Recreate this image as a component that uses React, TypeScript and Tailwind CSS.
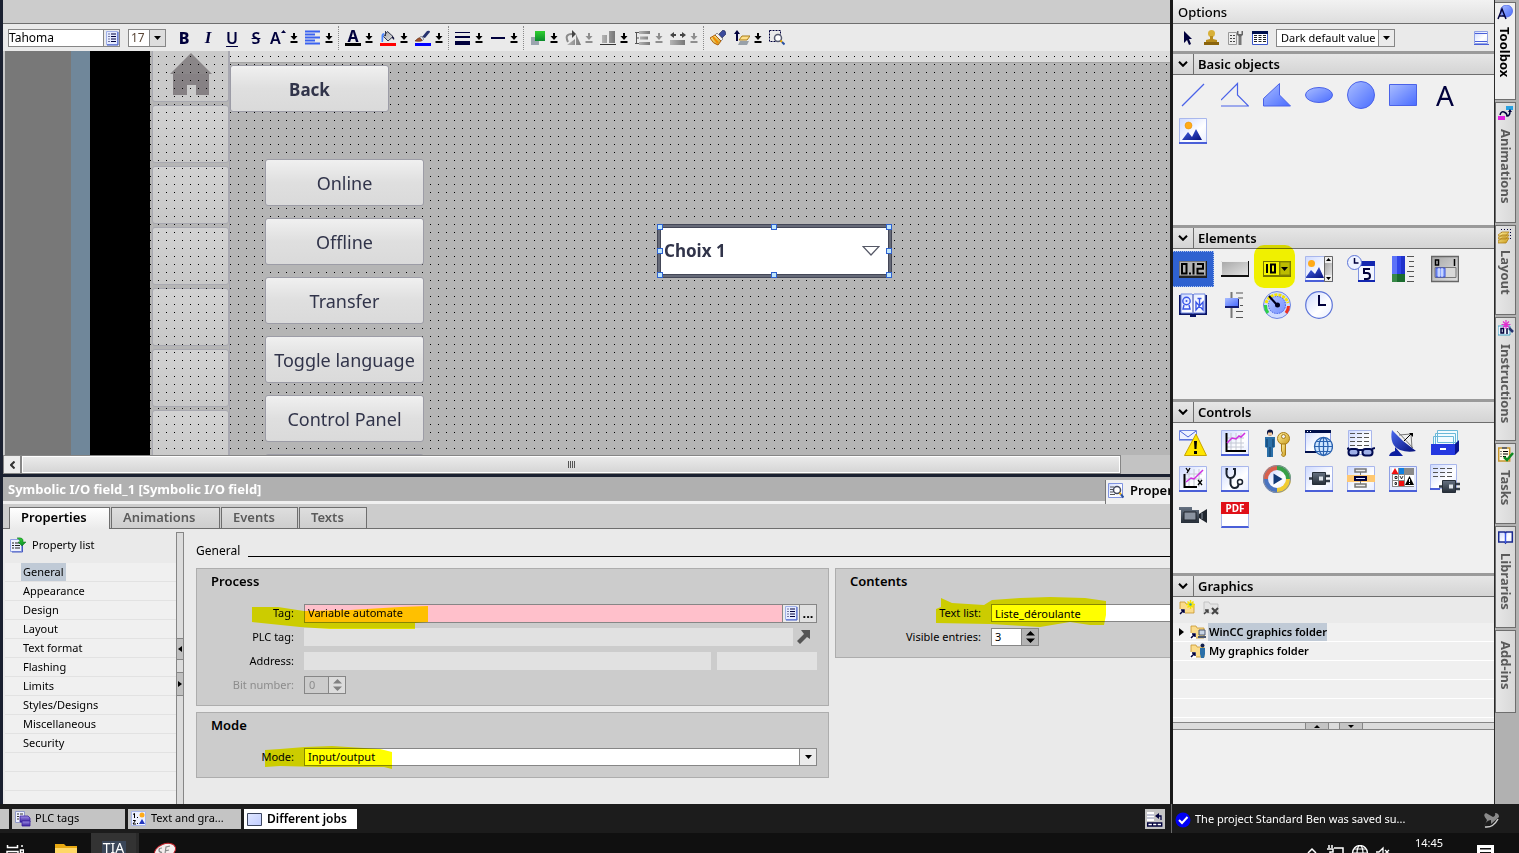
import React, { useState } from "react";
import clsx from "clsx";

type IconProps = { className?: string };

// Gradients shared by every icon on the page
const IconDefs = () => (
  <svg className="absolute h-0 w-0" aria-hidden="true">
    <defs>
      <linearGradient id="blueFill" x1="0" y1="0" x2="1" y2="1">
        <stop offset="0" stopColor="#a9bdff" />
        <stop offset="1" stopColor="#4a6cff" />
      </linearGradient>
      <linearGradient id="paper" x1="0" y1="0" x2="1" y2="1">
        <stop offset="0" stopColor="#cdd9ff" />
        <stop offset="0.6" stopColor="#ffffff" />
        <stop offset="1" stopColor="#e6ecff" />
      </linearGradient>
      <linearGradient id="navy" x1="0" y1="0" x2="1" y2="1">
        <stop offset="0" stopColor="#4a6af0" />
        <stop offset="1" stopColor="#06107a" />
      </linearGradient>
      <linearGradient id="metal" x1="0" y1="0" x2="1" y2="1">
        <stop offset="0" stopColor="#a6a6a6" />
        <stop offset="1" stopColor="#e2e2e2" />
      </linearGradient>
      <linearGradient id="greyShade" x1="0" y1="0" x2="1" y2="0">
        <stop offset="0" stopColor="#b5b5b5" />
        <stop offset="1" stopColor="#777777" />
      </linearGradient>
      <linearGradient id="gold" x1="0" y1="0" x2="1" y2="1">
        <stop offset="0" stopColor="#fff0a0" />
        <stop offset="1" stopColor="#c99a18" />
      </linearGradient>
      <linearGradient id="green" x1="0" y1="0" x2="0" y2="1">
        <stop offset="0" stopColor="#2fd02f" />
        <stop offset="1" stopColor="#0b8a2b" />
      </linearGradient>
      <linearGradient id="purple" x1="0" y1="0" x2="0" y2="1">
        <stop offset="0" stopColor="#a090e8" />
        <stop offset="1" stopColor="#3a1f9c" />
      </linearGradient>
      <linearGradient id="steel" x1="0" y1="0" x2="0" y2="1">
        <stop offset="0" stopColor="#667282" />
        <stop offset="1" stopColor="#262e38" />
      </linearGradient>
    </defs>
  </svg>
);

const Svg16 = ({ children, className }: React.PropsWithChildren<IconProps>) => (
  <svg
    viewBox="0 0 16 16"
    className={clsx("size-4 shrink-0", className)}
    fill="none"
    aria-hidden="true"
  >
    {children}
  </svg>
);

const Svg28 = ({ children }: React.PropsWithChildren) => (
  <svg viewBox="0 0 28 28" className="size-7" fill="none" aria-hidden="true">
    {children}
  </svg>
);

const Sheet = () => (
  <>
    <path d="M.5 1.500h27v25H.5z" fill="url(#paper)" stroke="#a9b7ec" />
    <path d="M0 26h28" stroke="#4a5fd8" strokeWidth="2" />
  </>
);

const DropArrow = ({ dim }: { dim?: boolean }) => (
  <svg viewBox="0 0 8 10" className="h-2.5 w-2" aria-hidden="true">
    <path
      d="M3 0h2v3h2.500L4 7 .5 3H3zM.5 8h7v2h-7z"
      fill={dim ? "#8e8e8e" : "#000000"}
    />
  </svg>
);

const Triangle = () => (
  <svg viewBox="0 0 7 4" className="h-1 w-[7px]" aria-hidden="true">
    <path d="M0 0h7L3.500 4z" fill="#000" />
  </svg>
);

const ListIcon = () => (
  <Svg16 className="size-3.5">
    <path d="M2.500 1.500h11v13h-11z" fill="#e6ecff" stroke="#a0b0e8" />
    <path
      d="M4.500 4h1M7 4h5M4.500 6.500h1M7 6.500h5M4.500 9h1M7 9h5M4.500 11.500h1M7 11.500h5"
      stroke="#00003c"
    />
    <path d="M14 2v13H3" stroke="#3c56c8" />
  </Svg16>
);

/* ---------- format toolbar ---------- */

const formatTools = {
  align: (
    <Svg16>
      <path
        d="M0 1.500h15M0 4.500h10M0 7.500h15M0 10.500h10M0 13.500h15"
        stroke="#3a62f0"
        strokeWidth="2"
      />
    </Svg16>
  ),
  fill: (
    <Svg16>
      <path d="M7.500 1.500 13 6.500 8 11 3.500 6.500z" fill="url(#metal)" stroke="#30364c" />
      <path d="M5.500 1v5" stroke="#30364c" />
      <path d="M1.500 12V6q0-3 3-3l-1 3-.5 6z" fill="#4a86ff" />
      <path d="M12 6q3 1 2 4l-2-2z" fill="#14143c" />
      <path d="M0 14.500h16" stroke="#f00" strokeWidth="3" />
    </Svg16>
  ),
  brush: (
    <Svg16>
      <path d="m7 7 5-6q3-1 3 1l-5 6z" fill="#26326e" />
      <path d="m6 6 3 3-2 2-3-2z" fill="#d8dce8" stroke="#555" strokeWidth=".5" />
      <path d="M0 11q4-4 5-3l2 2q0 2-7 1z" fill="#a0522d" stroke="#5a2a10" strokeWidth=".6" />
      <path d="M0 14.500h16" stroke="#00f" strokeWidth="3" />
    </Svg16>
  ),
  lineWidths: (
    <Svg16>
      <path d="M0 2.500h15" stroke="#00003c" />
      <path d="M0 7h15" stroke="#00003c" strokeWidth="2" />
      <path d="M0 13h15" stroke="#00003c" strokeWidth="4" />
    </Svg16>
  ),
  lineStyle: (
    <Svg16>
      <path d="M1 8h14" stroke="#00003c" strokeWidth="2" />
    </Svg16>
  ),
  layers: (
    <Svg16>
      <path d="M1 7h8v8H1z" fill="#9aa4ae" />
      <path d="M5 1h10v10H5z" fill="url(#green)" />
    </Svg16>
  ),
  rotate: (
    <Svg16>
      <path d="m11 4 5 11h-5zM10 9v6H2z" fill="url(#greyShade)" />
      <path d="M3 12Q-1 4 7 4" stroke="#8a8a8a" strokeWidth="2" />
      <path d="m7 0 4 4-4 4z" fill="#444" />
    </Svg16>
  ),
  alignBottom: (
    <Svg16>
      <path d="M2 5h5v8H2zM9 1h6v12H9z" fill="url(#greyShade)" />
      <path d="M0 14.500h16" stroke="#333" />
    </Svg16>
  ),
  distribute: (
    <Svg16>
      <path d="M4 1h11v3H4zM5 6.500h8v3H5zM4 12h11v3H4z" fill="url(#greyShade)" />
      <path d="M1.500 2v12M0 2.500h4M0 13.500h4M1 8h3" stroke="#555" />
    </Svg16>
  ),
  sameWidth: (
    <Svg16>
      <path d="M0 10h15v5H0z" fill="url(#greyShade)" />
      <path d="m0 5 4-3v6zM16 5l-4-3v6z" fill="#444" />
      <path d="M3 5h3M10 5h3" stroke="#444" strokeWidth="2" />
    </Svg16>
  ),
  painter: (
    <Svg16>
      <path d="m9 4 4-4 2 1 1 3-4 4z" fill="#3a4a9c" stroke="#1a2454" strokeWidth=".6" />
      <path d="m7 3 6 6-2 2-6-6z" fill="#f0f0f4" stroke="#555" strokeWidth=".6" />
      <path d="m5 5 6 6-3 4q-5-1-8-7z" fill="url(#gold)" stroke="#b0600c" />
      <path d="m3 7 5 6" stroke="#f08a00" strokeWidth="2" />
    </Svg16>
  ),
  order: (
    <Svg16>
      <path d="M6 11h9l-2 4H4z" fill="#98a0a8" />
      <path d="M8 6h8l-3 4H5z" fill="#ffe08a" stroke="#a87c18" />
      <path d="M3 11V3" stroke="#00003c" strokeWidth="2" />
      <path d="M0 4 3 0l3 4z" fill="#00003c" />
    </Svg16>
  ),
  zoomArea: (
    <Svg16>
      <path d="M.5.5h11v11H.5z" stroke="#00003c" strokeDasharray="2 1" />
      <circle cx="9" cy="8" r="3.500" fill="#fff" stroke="#555a70" strokeWidth="1.500" />
      <path d="m11.500 10.500 1.500 1.500" stroke="#e8a800" strokeWidth="2" />
      <path d="m13 12 2.500 2.500" stroke="#2a50a0" strokeWidth="2" />
    </Svg16>
  ),
};

const ToolSeparator = () => (
  <span className="mr-1 h-6 border-l border-dotted border-[#8a8a8a]" />
);

const SplitTool = ({
  label,
  dim,
  children,
}: React.PropsWithChildren<{ label: string; dim?: boolean }>) => (
  <div className="mr-1 flex shrink-0 items-center">
    <button aria-label={label} className="flex w-5 items-center justify-center">
      {children}
    </button>
    <button
      aria-label={`${label} options`}
      className="flex w-[11px] items-center justify-center"
    >
      <DropArrow dim={dim} />
    </button>
  </div>
);

const FormatToolbar = () => (
  <div className="flex h-[27px] shrink-0 items-center overflow-hidden bg-[#eaeaea] pl-[5px] text-[#00003c]">
    <div className="flex h-[18px] w-28 shrink-0 border border-[#868686] bg-white">
      <input
        aria-label="Font family"
        defaultValue="Tahoma"
        className="w-0 flex-1 bg-transparent text-[12px] leading-4 text-black outline-none"
      />
      <button
        aria-label="Choose font"
        className="flex w-4 items-center justify-center border-l border-[#868686] bg-[#ebebeb]"
      >
        <ListIcon />
      </button>
    </div>
    <div className="ml-2 flex h-[18px] w-[38px] shrink-0 border border-[#868686] bg-white">
      <input
        aria-label="Font size"
        defaultValue="17"
        className="w-0 flex-1 bg-transparent pl-0.5 text-[12px] leading-4 text-[#5a4636] outline-none"
      />
      <button
        aria-label="Choose font size"
        className="flex w-4 items-center justify-center border-l border-[#868686] bg-[#dddddd]"
      >
        <Triangle />
      </button>
    </div>
    <button className="ml-1.5 w-6 shrink-0 text-[16px] font-extrabold">B</button>
    <button className="w-6 shrink-0 font-['Liberation_Serif',serif] text-[17px] font-bold italic">
      I
    </button>
    <button className="w-6 shrink-0 text-[16px] font-semibold underline underline-offset-2">
      U
    </button>
    <button className="w-6 shrink-0 text-[16px] font-semibold line-through">
      S
    </button>
    <SplitTool label="Text size">
      <span className="text-[16px] font-semibold">A</span>
      <svg viewBox="0 0 5 3" className="mb-3 h-[3px] w-[5px]" aria-hidden="true">
        <path d="M0 3h5L2.500 0z" fill="#00003c" />
      </svg>
    </SplitTool>
    <SplitTool label="Alignment">{formatTools.align}</SplitTool>
    <ToolSeparator />
    <SplitTool label="Text colour">
      <span className="h-[17px] w-4 border-b-[3px] border-black text-center text-[16px] leading-[14px] font-bold">
        A
      </span>
    </SplitTool>
    <SplitTool label="Background colour">{formatTools.fill}</SplitTool>
    <SplitTool label="Border colour">{formatTools.brush}</SplitTool>
    <ToolSeparator />
    <SplitTool label="Line width">{formatTools.lineWidths}</SplitTool>
    <SplitTool label="Line style">{formatTools.lineStyle}</SplitTool>
    <ToolSeparator />
    <SplitTool label="Layer">{formatTools.layers}</SplitTool>
    <SplitTool label="Rotate" dim>
      {formatTools.rotate}
    </SplitTool>
    <SplitTool label="Align objects">{formatTools.alignBottom}</SplitTool>
    <SplitTool label="Distribute" dim>
      {formatTools.distribute}
    </SplitTool>
    <SplitTool label="Same size" dim>
      {formatTools.sameWidth}
    </SplitTool>
    <ToolSeparator />
    <button aria-label="Format painter" className="mr-1 flex w-5 shrink-0 justify-center">
      {formatTools.painter}
    </button>
    <SplitTool label="Tab order">{formatTools.order}</SplitTool>
    <button aria-label="Zoom area" className="flex w-5 shrink-0 justify-center">
      {formatTools.zoomArea}
    </button>
  </div>
);

/* ---------- screen editor ---------- */

const GRID =
  "pointer-events-none absolute inset-0 bg-[conic-gradient(from_270deg_at_1px_1px,#000_90deg,transparent_0)] bg-[length:8px_8px] bg-[position:0_5px]";

const jobs = ["Online", "Offline", "Transfer", "Toggle language", "Control Panel"];

const handles = [
  "-left-[4px] -top-[4px]",
  "left-1/2 -ml-1 -top-[4px]",
  "-right-[4px] -top-[4px]",
  "-left-[4px] top-1/2 -mt-[3px]",
  "-right-[4px] top-1/2 -mt-[3px]",
  "-left-[4px] -bottom-[4px]",
  "left-1/2 -ml-1 -bottom-[4px]",
  "-right-[4px] -bottom-[4px]",
];

const HMI_BUTTON =
  "rounded-[3px] border border-[#9c9ca6] bg-linear-to-b from-[#f0f0f0] via-[#dfdfdf] to-[#dadada] pt-0.5 text-[#31344a]";

const ScreenEditor = () => (
  <div className="flex min-h-0 flex-1 overflow-hidden border-l-2 border-[#c8c8c8] bg-[#787878]">
    <div className="w-[66px] shrink-0" />
    <div className="w-[19px] shrink-0 bg-[#70879a]" />
    <div className="w-[60px] shrink-0 bg-black" />
    <div className="relative flex min-w-0 flex-1 overflow-hidden bg-[#b5b5b5]">
      {/* navigation column of the template */}
      <div className="flex w-20 shrink-0 flex-col gap-[3px] border-r border-[#a8a8b2] pl-0.5">
        <div className="flex h-[51px] shrink-0 justify-center rounded-b-[3px] border border-t-0 border-[#a8a8b0] bg-[#cacaca]">
          <svg viewBox="0 0 42 44" className="h-11 w-[42px]" aria-hidden="true">
            <path d="M21 2 42 23H0z" fill="#8a8688" />
            <path d="M3 23h36v21H26V34h-9v10H3z" fill="#868184" />
          </svg>
        </div>
        {Array.from({ length: 6 }).map((_, i) => (
          <div
            key={i}
            className="h-[58px] shrink-0 rounded-[3px] border border-[#a8a8b0] bg-linear-to-b from-[#d2d2d2] to-[#c8c8c8]"
          />
        ))}
      </div>
      <div className="h-3 flex-1 border-b border-[#a4a4a4] bg-[#dcdcdc]" />
      <div className={GRID} />

      <button
        className={clsx(
          HMI_BUTTON,
          "absolute top-3.5 left-20 h-[47px] w-[159px] text-[17px] font-bold",
        )}
      >
        Back
      </button>
      <div className="absolute top-[108px] left-[115px] flex flex-col gap-3">
        {jobs.map((job) => (
          <button
            key={job}
            className={clsx(HMI_BUTTON, "h-[47px] w-[159px] text-[18px]")}
          >
            {job}
          </button>
        ))}
        <div className={clsx(HMI_BUTTON, "h-[47px] w-[159px]")} />
      </div>

      {/* selected symbolic I/O field */}
      <div className="absolute top-[173px] left-[507px] h-[54px] w-[235px] border border-[#444757] bg-[#666a78] p-0.5">
        <button className="flex size-full items-center justify-between border border-[#444757] bg-white pr-2 pl-[3px]">
          <span className="text-[17px] font-bold text-[#31344a]">Choix 1</span>
          <svg viewBox="0 0 18 10" className="h-2.5 w-[18px]" fill="none" aria-hidden="true">
            <path d="M1 .5h16L9 9z" stroke="#555866" strokeWidth="1.200" />
          </svg>
        </button>
        <div className="pointer-events-none absolute inset-[3px]">
          {handles.map((pos) => (
            <span
              key={pos}
              className={clsx("absolute size-1.5 border border-[#2f62d0] bg-[#bfe6fb]", pos)}
            />
          ))}
        </div>
      </div>
    </div>
  </div>
);

const HorizontalScrollbar = () => (
  <div className="flex h-[19px] shrink-0 bg-[#c3c3c3]">
    <button
      aria-label="Scroll left"
      className="flex w-[18px] items-center justify-center border border-[#868686] bg-[#ececec]"
    >
      <svg viewBox="0 0 5 8" className="h-2 w-[5px]" fill="none" aria-hidden="true">
        <path d="M4.500.5 1 4l3.500 3.500" stroke="#333" strokeWidth="2" />
      </svg>
    </button>
    <div className="mr-[49px] flex flex-1 items-center justify-center gap-px border border-[#868686] bg-linear-to-b from-[#ececec] to-[#d4d4d4] outline-1 -outline-offset-2 outline-white">
      {[0, 1, 2, 3].map((i) => (
        <span key={i} className="h-[7px] w-px bg-[#555]" />
      ))}
    </div>
  </div>
);

/* ---------- inspector ---------- */

const inspectorTabs = [
  { name: "Properties", width: "w-[101px] pl-[11px]" },
  { name: "Animations", width: "w-[109px] pl-[11px]" },
  { name: "Events", width: "w-[77px] pl-[11px]" },
  { name: "Texts", width: "w-[68px] pl-[11px]" },
];

const categories = [
  "General",
  "Appearance",
  "Design",
  "Layout",
  "Text format",
  "Flashing",
  "Limits",
  "Styles/Designs",
  "Miscellaneous",
  "Security",
];

const Marker = ({ points }: { points: string }) => (
  <svg
    className="pointer-events-none absolute top-0 left-0 h-20 w-72 overflow-visible mix-blend-multiply"
    aria-hidden="true"
  >
    <polygon points={points} fill="#ffff00" />
  </svg>
);

const Group = ({
  title,
  className,
  children,
}: React.PropsWithChildren<{ title: string; className?: string }>) => (
  <section className={clsx("relative border border-[#adadad] bg-[#cccccc] pb-2.5", className)}>
    <h3 className="h-8 pt-1 pl-3.5 text-[13px] leading-4 font-semibold">{title}</h3>
    {children}
  </section>
);

const Field = ({
  id,
  label,
  labelWidth,
  dim,
  children,
}: React.PropsWithChildren<{
  id: string;
  label: string;
  labelWidth: string;
  dim?: boolean;
}>) => (
  <div className="flex h-6 items-center">
    <label
      htmlFor={id}
      className={clsx("mr-2.5 shrink-0 text-right", labelWidth, dim && "text-[#8c8c8c]")}
    >
      {label}
    </label>
    {children}
  </div>
);

const Stepper = ({ dim }: { dim?: boolean }) => (
  <button
    aria-label="Change value"
    className={clsx(
      "flex w-[17px] flex-col items-center justify-center gap-[3px] border-l border-[#868686]",
      dim ? "bg-[#dcdcdc]" : "bg-[#b4b4b4]",
    )}
  >
    <svg viewBox="0 0 9 12" className="h-3 w-[9px]" aria-hidden="true">
      <path d="M0 4.500h9L4.500 0zM0 7.500h9L4.500 12z" fill={dim ? "#808080" : "#000"} />
    </svg>
  </button>
);

const Inspector = () => {
  const [tab, setTab] = useState("Properties");
  const [category, setCategory] = useState("General");

  return (
    <div className="flex h-[327px] shrink-0 flex-col overflow-hidden bg-[#eaeaea]">
      <div className="flex h-[27px] shrink-0 items-stretch justify-between border-b-[3px] border-[#f0f0f0] bg-[#b0b0b0]">
        <h2 className="pl-[5px] text-[13px] leading-6 font-bold whitespace-nowrap text-white">
          Symbolic I/O field_1 [Symbolic I/O field]
        </h2>
        <button className="mt-[3px] -mb-[3px] flex w-[65px] items-center gap-1.5 overflow-hidden border-l border-[#777] bg-[#f0f0f0] pb-0.5 pl-0.5 text-[13px] font-semibold">
          <Svg16>
            <path d="M.5.5h14v14H.5z" fill="url(#paper)" stroke="#7f93e0" />
            <path d="M2 4h4M2 6.500h3M2 9h3M2 11.500h5" stroke="#555" />
            <circle cx="9" cy="7" r="3.500" fill="#fff" stroke="#444a60" strokeWidth="1.500" />
            <path d="m11.500 10 1.500 1.500" stroke="#e8a800" strokeWidth="2" />
            <path d="m13 11.500 2.500 3" stroke="#2a50a0" strokeWidth="2" />
          </Svg16>
          Properties
        </button>
      </div>

      <div className="flex h-[25px] shrink-0 items-end border-b border-[#6e6e6e] bg-[#cccccc] pl-1.5">
        {inspectorTabs.map(({ name, width }) => (
          <button
            key={name}
            onClick={() => setTab(name)}
            className={clsx(
              "mr-px border border-b-0 border-[#6e6e6e] text-left text-[13px] font-semibold",
              width,
              tab === name
                ? "-mb-px h-[22px] bg-linear-to-b from-white to-[#eaeaea] pb-0.5 text-black"
                : "h-[21px] bg-linear-to-b from-[#dedede] to-[#cecece] text-[#5a5a5a]",
            )}
          >
            {name}
          </button>
        ))}
      </div>

      <div className="flex min-h-0 flex-1 text-[11px]">
        <nav className="w-[173px] shrink-0 overflow-hidden pl-0.5">
          <div className="flex h-[34px] items-center gap-1.5 pb-0.5 pl-[5px]">
            <Svg16>
              <path d="M.5 2.500h11v12H.5z" fill="#eef1ff" stroke="#8fa0e4" />
              <path d="M2 6h2M5 6h5M2 8.500h2M5 8.500h5M2 11h2M5 11h5" stroke="#222" />
              <path d="M12.500 4v11H2" stroke="#4458c0" />
              <path d="M7 1q7-1 6 4h3l-4 4-4-4h2q0-3-3-4z" fill="url(#green)" stroke="#0a6a1c" strokeWidth=".5" />
            </Svg16>
            Property list
          </div>
          <ul>
            {categories.map((name) => (
              <li key={name} className="h-[19px] border-b border-[#e2e2e2] bg-[#f0f0f0] pl-4">
                <button
                  onClick={() => setCategory(name)}
                  className={clsx(
                    "h-[18px] px-0.5 leading-[18px]",
                    category === name && "bg-[#c0cad6]",
                  )}
                >
                  {name}
                </button>
              </li>
            ))}
            {[0, 1, 2].map((i) => (
              <li key={i} className="h-[19px] border-b border-[#e2e2e2] bg-[#f0f0f0]" />
            ))}
          </ul>
        </nav>

        <div className="mt-[3px] flex w-2 shrink-0 flex-col border border-b-0 border-[#868686] bg-[#dcdcdc]">
          <div className="h-[105px]" />
          <button
            aria-label="Collapse list"
            className="flex h-[22px] items-center justify-center border-y border-[#868686] bg-[#c0c0c0]"
          >
            <svg viewBox="0 0 4 6" className="h-1.5 w-1" aria-hidden="true">
              <path d="M4 0v6L0 3z" fill="#000" />
            </svg>
          </button>
          <div className="h-3" />
          <button
            aria-label="Expand list"
            className="flex h-6 items-center justify-center border-y border-[#868686] bg-[#c0c0c0]"
          >
            <svg viewBox="0 0 4 6" className="h-1.5 w-1" aria-hidden="true">
              <path d="M0 0v6l4-3z" fill="#000" />
            </svg>
          </button>
        </div>

        <div className="min-w-0 flex-1 overflow-hidden pl-3">
          <div className="flex h-[39px] items-center">
            <h2 className="mt-1 text-[12px]">General</h2>
            <div className="mt-4 ml-2 flex-1 border-b border-black" />
          </div>
          <div className="flex items-start gap-1.5">
            <div className="flex w-[633px] shrink-0 flex-col gap-1.5">
              <Group title="Process" className="h-[138px]">
                <Field id="tag" label="Tag:" labelWidth="w-[97px]">
                  <div className="flex h-[19px] flex-1 border border-[#868686] bg-[#ffc0cb]">
                    <input
                      id="tag"
                      defaultValue="Variable automate"
                      className="w-0 flex-1 bg-transparent pl-[3px] outline-none"
                    />
                    <button
                      aria-label="Select tag"
                      className="flex w-[17px] items-center justify-center border-l border-[#868686] bg-[#ebebeb]"
                    >
                      <ListIcon />
                    </button>
                    <button
                      aria-label="Browse tags"
                      className="w-[17px] border-l border-[#868686] bg-[#e0e0e0] text-center text-[13px] leading-3 font-bold"
                    >
                      ...
                    </button>
                  </div>
                  <span className="w-[11px]" />
                </Field>
                <Field id="plc-tag" label="PLC tag:" labelWidth="w-[97px]">
                  <input id="plc-tag" readOnly className="h-[18px] w-0 flex-1 bg-[#e1e1e1] outline-none" />
                  <button aria-label="Go to tag" className="mr-[17px] ml-1">
                    <svg viewBox="0 0 14 14" className="size-3.5" aria-hidden="true">
                      <path d="M4 0h9v9l-3-2-7 7-3-3 7-7z" fill="#555555" />
                    </svg>
                  </button>
                </Field>
                <Field id="address" label="Address:" labelWidth="w-[97px]">
                  <input id="address" readOnly className="h-[18px] w-0 flex-1 bg-[#e1e1e1] outline-none" />
                  <input
                    aria-label="Address offset"
                    readOnly
                    className="mr-[11px] ml-1.5 h-[18px] w-[100px] bg-[#e1e1e1] outline-none"
                  />
                </Field>
                <Field id="bit" label="Bit number:" labelWidth="w-[97px]" dim>
                  <div className="flex h-[18px] w-[42px] border border-[#868686]">
                    <input
                      id="bit"
                      disabled
                      defaultValue="0"
                      className="w-0 flex-1 bg-transparent pl-1 text-[#8c8c8c]"
                    />
                    <Stepper dim />
                  </div>
                </Field>
                <Marker points="55,38 81,38 107,42 153,41 203,38 231,37 231,53 218,54 218,60 133,60 103,58 55,53" />
              </Group>
              <Group title="Mode" className="h-[66px]">
                <Field id="mode" label="Mode:" labelWidth="w-[97px]">
                  <div className="relative mr-[11px] h-[18px] flex-1">
                    <select
                      id="mode"
                      defaultValue="Input/output"
                      className="block h-full w-full appearance-none border border-[#868686] bg-white pl-[3px] outline-none"
                    >
                      <option>Input/output</option>
                      <option>Input</option>
                      <option>Output</option>
                    </select>
                    <span className="pointer-events-none absolute inset-y-0 right-0 flex w-[18px] items-center justify-center border border-[#868686] bg-[#ebebeb]">
                      <Triangle />
                    </span>
                  </div>
                </Field>
                <Marker points="68,37 83,36 108,34 135,33 183,36 195,39 195,56 187,54 123,54 83,53 68,54" />
              </Group>
            </div>

            <Group title="Contents" className="h-[90px] min-w-0 flex-1 border-r-0">
              <Field id="text-list" label="Text list:" labelWidth="w-[145px]">
                <input
                  id="text-list"
                  defaultValue="Liste_déroulante"
                  className="h-[18px] w-0 flex-1 border border-r-0 border-[#868686] bg-white pl-[3px] outline-none"
                />
              </Field>
              <Field id="entries" label="Visible entries:" labelWidth="w-[145px]">
                <div className="flex h-[18px] w-12 border border-[#868686] bg-white">
                  <input id="entries" defaultValue="3" className="w-0 flex-1 pl-[3px] outline-none" />
                  <Stepper />
                </div>
              </Field>
              <Marker points="100,40 105,38 105,29 116,34 148,36 156,31 184,29 214,28 249,29 270,32 270,46 268,56 254,56 234,53 204,58 154,55 100,54" />
            </Group>
          </div>
        </div>
      </div>
    </div>
  );
};

/* ---------- toolbox ---------- */

type Tool = { name: string; icon: React.ReactNode; selected?: boolean; marked?: boolean };

const basicObjects: Tool[] = [
  {
    name: "Line",
    icon: (
      <Svg28>
        <path d="M3 25 25 3" stroke="#4a62e8" strokeWidth="1.300" />
      </Svg28>
    ),
  },
  {
    name: "Polyline",
    icon: (
      <Svg28>
        <path d="M0 19 16.500 2.500V14l11 11H0" stroke="#4a62e8" strokeWidth="1.200" />
      </Svg28>
    ),
  },
  {
    name: "Polygon",
    icon: (
      <Svg28>
        <path d="M.5 25V17.500l16-15V14l11 11z" fill="url(#blueFill)" stroke="#4a62e8" />
      </Svg28>
    ),
  },
  {
    name: "Ellipse",
    icon: (
      <Svg28>
        <ellipse cx="14" cy="14" rx="13.500" ry="7.500" fill="url(#blueFill)" stroke="#4a62e8" />
      </Svg28>
    ),
  },
  {
    name: "Circle",
    icon: (
      <Svg28>
        <circle cx="14" cy="14" r="13.500" fill="url(#blueFill)" stroke="#4a62e8" />
      </Svg28>
    ),
  },
  {
    name: "Rectangle",
    icon: (
      <Svg28>
        <path d="M.5 3.500h27v21H.5z" fill="url(#blueFill)" stroke="#4a62e8" />
      </Svg28>
    ),
  },
  {
    name: "Text field",
    icon: <span className="text-[28px] leading-7 text-[#00003c]">A</span>,
  },
  {
    name: "Graphic view",
    icon: (
      <Svg28>
        <Sheet />
        <circle cx="9.500" cy="8.500" r="3.500" fill="#ffab1a" stroke="#e08a00" strokeWidth=".5" />
        <path d="m3 23 6-8 4 5 4-8 6 11z" fill="url(#navy)" />
      </Svg28>
    ),
  },
];

const elements: Tool[] = [
  {
    name: "I/O field",
    selected: true,
    icon: (
      <Svg28>
        <path d="M0 6h28v17H0z" fill="#222" />
        <path d="M.5 6.500h26v14H.5z" fill="#b4b4b4" stroke="#777" />
        <path d="M3 9h4v9H3zM14 8v11M17 9h4M19 9v9h5M19 9v4" stroke="none" />
        <path
          d="M3 9h4.500v9.500H3zM14.500 8v11.500M18 9h6v4.700h-5.500v4.800H25"
          stroke="#000"
          strokeWidth="2"
        />
        <path d="M10 17.500h2v2h-2z" fill="#000" />
      </Svg28>
    ),
  },
  {
    name: "Button",
    icon: (
      <Svg28>
        <path d="M0 6h28v16H0z" fill="#111" />
        <path d="M0 6h27v14H0z" fill="url(#metal)" />
        <path d="M.5 20V6.500H27" stroke="#eee" />
      </Svg28>
    ),
  },
  {
    name: "Symbolic I/O field",
    marked: true,
    icon: (
      <Svg28>
        <path d="M0 6h28v16H0z" fill="#777" />
        <path d="M1 7h15v13H1z" fill="#f4f4f4" />
        <path d="M17 7h10v13H17z" fill="#bcbcbc" stroke="#888" />
        <path d="M4 9v9M8 9.500h4v8H8z" stroke="#000" strokeWidth="2" />
        <path d="M18 12h7l-3.500 4z" fill="#000" />
      </Svg28>
    ),
  },
  {
    name: "Graphic I/O field",
    icon: (
      <Svg28>
        <Sheet />
        <circle cx="6.500" cy="8.500" r="3.500" fill="#ffab1a" />
        <path d="m1 22 5-7 4 4 4-7 5 11H1z" fill="url(#navy)" />
        <path d="M19.500 1.500h8v25h-8z" fill="#eee" stroke="#666" />
        <path d="M20 8h7v12h-7z" fill="url(#metal)" />
        <path d="m21 6 2.500-3L26 6zM21 22l2.500 3 2.500-3z" fill="#000" />
      </Svg28>
    ),
  },
  {
    name: "Date/time field",
    icon: (
      <Svg28>
        <path d="M11.500 6.500h16v20h-16z" fill="#f2f5ff" stroke="#7f93e0" />
        <path d="M11 6h17v5H11zM11 25h17v2H11z" fill="#1226b0" />
        <circle cx="7.500" cy="7.500" r="7" fill="#eef3ff" stroke="#5c74d8" />
        <path d="M7.500 3v5h4" stroke="#00003c" strokeWidth="1.500" />
        <path d="M23 14h-6v4h3q3 0 3 3t-3 3h-3" stroke="#00003c" strokeWidth="2" />
      </Svg28>
    ),
  },
  {
    name: "Bar",
    icon: (
      <Svg28>
        <path d="M3 1h13v18H3z" fill="#3044e8" />
        <path d="M3 1h5v18H3z" fill="#6f86ff" opacity=".7" />
        <path d="M12 1h4v18h-4z" fill="#1424b8" opacity=".6" />
        <path d="M3 19h13v8H3z" fill="#1a6b2e" />
        <path d="M3 19h5v8H3z" fill="#4c9c58" opacity=".6" />
        <path
          d="M18 1.500h7M20 6.500h5M20 11.500h5M18 16.500h7M20 21.500h5M18 26.500h7"
          stroke="#555"
        />
      </Svg28>
    ),
  },
  {
    name: "Switch",
    icon: (
      <Svg28>
        <path d="M.5 1.500h27v25H.5z" fill="url(#metal)" stroke="#666" strokeWidth="1.500" />
        <path d="M4 12.500h21v10H4z" fill="#d8d8d8" stroke="#777" />
        <path d="M5 13h9v9H5z" fill="#8ea8ff" stroke="#3a4fd0" />
        <path d="M8 13v9M11 13v9" stroke="#fff" />
        <path d="M4.500 5h3v5h-3zM23.500 4v7" stroke="#000" strokeWidth="1.500" />
      </Svg28>
    ),
  },
  {
    name: "Symbol library",
    icon: (
      <Svg28>
        <path d="M0 4h28v20H17v2h-6v-2H0z" fill="#0a1466" />
        <path d="M2 3h11l1 1 1-1h11v19H15l-1 1-1-1H2z" fill="url(#paper)" stroke="#6f86e0" />
        <path d="M14 4v19" stroke="#2a3aa8" />
        <circle cx="7.500" cy="10" r="3.700" stroke="#3a56e8" strokeWidth="1.400" />
        <circle cx="7.500" cy="10" r="1" fill="#3a56e8" />
        <path d="m5 14-1 4h7l-1-4M17 11v8l7-8v8zM20.500 15V8M18.500 7.500h4" stroke="#3a56e8" strokeWidth="1.400" />
      </Svg28>
    ),
  },
  {
    name: "Slider",
    icon: (
      <Svg28>
        <path d="M10.500 1v26" stroke="#777" strokeWidth="2" />
        <path d="M15 2h7M17 7h5M15 20.500h7M19 14.500h3M15 26.500h7" stroke="#555" />
        <path d="M4 8h14v9H4z" fill="#111a70" />
        <path d="M4 7h13v8H4z" fill="url(#blueFill)" />
      </Svg28>
    ),
  },
  {
    name: "Gauge",
    icon: (
      <Svg28>
        <circle cx="14" cy="14" r="13.500" fill="#cfdbff" stroke="#6f86e0" />
        <path d="M5 22a12 12 0 0 1-2.500-8" stroke="#2fd04a" strokeWidth="3" />
        <path
          d="M3 12A11.500 11.500 0 0 1 25 12"
          stroke="#f5e400"
          strokeWidth="3"
          strokeDasharray="3 1"
        />
        <path d="M25.500 15a12 12 0 0 1-2.500 7" stroke="#f03020" strokeWidth="3" />
        <circle cx="14" cy="14" r="9" fill="url(#blueFill)" opacity=".7" />
        <circle cx="14" cy="14" r="8.500" stroke="#3a56d8" strokeDasharray="1 1.500" />
        <path d="m6 5 8 9" stroke="#000020" strokeWidth="2" />
        <circle cx="14.500" cy="14" r="2.500" fill="#000020" />
      </Svg28>
    ),
  },
  {
    name: "Clock",
    icon: (
      <Svg28>
        <circle cx="14" cy="14" r="13.300" fill="url(#paper)" stroke="#5c74d8" strokeWidth="1.200" />
        <path d="M14 4v10h7" stroke="#00003c" strokeWidth="2" />
      </Svg28>
    ),
  },
];

const Plug = ({ x, y }: { x: number; y: number }) => (
  <g transform={`translate(${x} ${y})`}>
    <path d="M0 6.500h4M16 4h5M16 9h5" stroke="#333c48" strokeWidth="2.500" />
    <path d="M3.500.5h13v12h-13z" fill="url(#steel)" stroke="#262e38" />
    <path d="M10 4.500h4v4h-4z" fill="#dfe4ea" />
  </g>
);

const controls: Tool[] = [
  {
    name: "Alarm view",
    icon: (
      <Svg28>
        <path d="M.5 1.500h17v9H.5z" fill="#eef2ff" stroke="#6f86e0" />
        <path d="m1 2 8 6 8-6M0 11h18" stroke="#4a62d8" />
        <path d="m17 5 10.500 21.500h-22z" fill="#ffe600" stroke="#c8a400" strokeLinejoin="round" />
        <path d="M15 12h3l-.5 8h-2zM15 22h3v3h-3z" fill="#000" />
      </Svg28>
    ),
  },
  {
    name: "Trend view",
    icon: (
      <Svg28>
        <Sheet />
        <path d="M10 4v18M15 4v18M20 4v18M5 9h18M5 14h18M5 18h18" stroke="#c4c8d4" />
        <path d="M5.500 4v18H25" stroke="#000" strokeWidth="2" />
        <path d="m6 14 5-5 4 1 3-3 2 1 4-4" stroke="#d030e0" strokeWidth="1.500" />
      </Svg28>
    ),
  },
  {
    name: "User view",
    icon: (
      <Svg28>
        <circle cx="7" cy="3.500" r="3" fill="#0a1440" />
        <path d="M5 3.500h4v3H5z" fill="#f0c49a" />
        <path d="M2 8h10v10l-2 1v9H4v-9l-2-1z" fill="#2a6fa8" />
        <path d="M7 18v10M4 10v8M10 10v8" stroke="#0f3c66" />
        <circle cx="20.500" cy="9.500" r="6" fill="url(#gold)" stroke="#a87c18" />
        <circle cx="20.500" cy="7.500" r="2" fill="#f0f0f0" stroke="#a87c18" />
        <path d="M18.500 15h4v11l-2 2-2-2 1-2-1-2z" fill="url(#gold)" stroke="#a87c18" />
      </Svg28>
    ),
  },
  {
    name: "HTML browser",
    icon: (
      <Svg28>
        <path d="M.5 1.500h25v21H.5z" fill="url(#paper)" stroke="#8fa0e4" />
        <path d="M0 1h26v3H0zM0 22h12v2H0z" fill="#00104c" />
        <path d="M2 2.500h1M5 2.500h1" stroke="#fff" />
        <circle cx="18.500" cy="17.500" r="9" fill="#cfe6ff" stroke="#2a62b0" strokeWidth="1.300" />
        <ellipse cx="18.500" cy="17.500" rx="4.500" ry="9" stroke="#2a62b0" strokeWidth="1.200" />
        <path d="M9.500 17.500h18M18.500 8.500v18M11 12.500h15M11 22.500h15" stroke="#2a62b0" strokeWidth="1.200" />
      </Svg28>
    ),
  },
  {
    name: "Watch table",
    icon: (
      <Svg28>
        <path d="M1.500 1.500h23v24h-23z" fill="url(#paper)" stroke="#a9b7ec" />
        <path
          d="M3 4.500h5M10 4.500h5M17 4.500h5M3 8.500h5M10 8.500h5M17 8.500h5M3 12.500h5M10 12.500h5M17 12.500h5M3 16.500h5M10 16.500h5M17 16.500h5"
          stroke="#555"
        />
        <rect x="1.500" y="20" width="10" height="6.500" rx="3" fill="#9fb0e8" stroke="#000a50" strokeWidth="2" />
        <rect x="15.500" y="20" width="10" height="6.500" rx="3" fill="#9fb0e8" stroke="#000a50" strokeWidth="2" />
        <path d="M11 21h5M0 20l2-1M28 19l-3 1" stroke="#000a50" strokeWidth="2" />
      </Svg28>
    ),
  },
  {
    name: "Sm@rtClient view",
    icon: (
      <Svg28>
        <path d="m8 2 16 17M10 6 22 5l1 14" stroke="#777" />
        <path d="m15 12 8-8" stroke="#000" />
        <path d="M20 4h4v4z" fill="#000" />
        <path d="M3 1Q0 16 11 21q8 3 16 1L14 12z" fill="url(#navy)" />
        <path d="m6 18 8 9H0q1-4 6-5z" fill="#0c1ea0" />
      </Svg28>
    ),
  },
  {
    name: "Recipe view",
    icon: (
      <Svg28>
        <path d="M6.500 1.500h20v12h-20zM4.500 4.500h20v12h-20zM2.500 7.500h20v12h-20z" fill="#f2fbff" stroke="#6ab8d8" />
        <path d="M0 15h24v11H0z" fill="#2438e0" />
        <path d="m24 15 4-4v11l-4 4z" fill="#0a1490" />
        <path d="M9 19h6v2H9z" fill="#fff" />
      </Svg28>
    ),
  },
  {
    name: "f(x) trend view",
    icon: (
      <Svg28>
        <Sheet />
        <path d="M10 4v18M15 4v18M20 4v18M5 9h18M5 14h18" stroke="#c4c8d4" />
        <path d="M5.500 9v13H18" stroke="#000" strokeWidth="2" />
        <path d="m7 17 5-4 3 1 9-9" stroke="#d030e0" strokeWidth="1.500" />
        <path d="m7 3 2 3m2-3L8 8M19 15l4 5m0-5-4 5" stroke="#000" strokeWidth="1.300" />
      </Svg28>
    ),
  },
  {
    name: "System diagnostics view",
    icon: (
      <Svg28>
        <Sheet />
        <path
          d="M7 4H5.500v5Q6 13 9.500 13T14 9V4H12M9.500 13v6q1 4 4 4 4 0 4-4"
          stroke="#1a2230"
          strokeWidth="2"
        />
        <circle cx="19" cy="17" r="2.500" fill="#fff" stroke="#1a2230" strokeWidth="1.500" />
      </Svg28>
    ),
  },
  {
    name: "Media player",
    icon: (
      <Svg28>
        <path d="M14 0A14 14 0 0 0 0 14h14z" fill="#d8604c" />
        <path d="M14 0a14 14 0 0 1 14 14H14z" fill="#38a048" />
        <path d="M28 14a14 14 0 0 1-14 14V14z" fill="#f0cc30" />
        <path d="M0 14a14 14 0 0 0 14 14V14z" fill="#4a74c0" />
        <circle cx="14" cy="14" r="13.500" stroke="#8890a0" />
        <circle cx="14" cy="14" r="9" fill="url(#paper)" />
        <path d="m10.500 8.500 9 5.500-9 5.500z" fill="#123a78" />
      </Svg28>
    ),
  },
  {
    name: "Channel diagnostics",
    icon: (
      <Svg28>
        <Sheet />
        <Plug x={4} y={7} />
      </Svg28>
    ),
  },
  {
    name: "Criteria analysis",
    icon: (
      <Svg28>
        <Sheet />
        <path d="M0 10h28v7H0z" fill="#ffc870" />
        <path d="M13.500 7v3M13.500 16v3" stroke="#777" />
        <path d="M8 4h11v3H8zM8 19h11v3H8z" fill="#eee" stroke="#777" strokeWidth="1.500" />
        <path d="M8 12h11v3H8z" fill="#dfe6ff" stroke="#00003c" strokeWidth="2" />
      </Svg28>
    ),
  },
  {
    name: "Alarm indicator overview",
    icon: (
      <Svg28>
        <path d="M.5 1.500h27v25H.5z" fill="#e6ecff" stroke="#8fa0e4" />
        <path d="M3 3h22v19H3z" fill="#8a8a8a" />
        <path d="M3 3h6v6H3z" fill="#fff" />
        <path d="m6 3 3.500 6h-7z" fill="#f01010" />
        <path d="M10 3h5v6h-5z" fill="#1080e0" />
        <path d="M4 10h5v5H4zM10 10h5v5h-5zM4 16h5v5H4z" fill="#fff" />
        <path d="M10 16h5v5h-5z" fill="#f01010" />
        <path d="M6 11.500h2v2H6zM11 11l1.500 3L14 11M6 17.500h1.500v2H6z" stroke="#000" strokeWidth=".8" />
        <path d="M16 10h9v11h-9z" fill="#fff" />
        <path d="m20.500 11 4.500 9h-9z" fill="#000" />
        <path d="M20.500 14v3M20.500 18v1" stroke="#fff" />
        <path d="M0 26h28" stroke="#4a5fd8" strokeWidth="2" />
      </Svg28>
    ),
  },
  {
    name: "PLC status view",
    icon: (
      <svg
        viewBox="0 0 30 30"
        className="size-[30px]"
        fill="none"
        aria-hidden="true"
      >
        <path d="M.5.5h26v24H.5z" fill="url(#paper)" stroke="#a9b7ec" />
        <path
          d="M3 4.500h5M10 4.500h5M17 4.500h5M3 8.500h5M10 8.500h5M17 8.500h5M3 12.500h5M10 12.500h5M17 12.500h5"
          stroke="#555"
        />
        <path d="M0 25h10" stroke="#4a5fd8" strokeWidth="2" />
        <Plug x={9} y={16} />
      </svg>
    ),
  },
  {
    name: "Camera view",
    icon: (
      <Svg28>
        <path d="M0 6h13v3H0zM2 9h18v13H2z" fill="url(#steel)" />
        <path d="M5 11h12v8H5z" fill="#8a93a0" stroke="#20262e" />
        <path d="m20 13 8-5v14l-8-5z" fill="#20262e" />
        <path d="M23 12v6" stroke="#8a93a0" />
      </Svg28>
    ),
  },
  {
    name: "PDF view",
    icon: (
      <span className="block h-[26px] w-7 border border-b-2 border-[#a9b7ec] border-b-[#4a5fd8] bg-white">
        <span className="-mx-px -mt-px block h-3 bg-[#e01018] text-center text-[10px] leading-3 font-bold text-white">
          PDF
        </span>
      </span>
    ),
  },
];

const SectionHeader = ({ title }: { title: string }) => (
  <button className="flex h-6 w-full items-center border-t-[3px] border-b border-t-[#9a9a9a] border-b-[#6e6e6e] bg-linear-to-b from-[#e6e6e6] to-[#d4d4d4] text-left text-[13px] font-semibold">
    <span className="flex h-full w-[21px] items-center justify-center border-r border-[#6e6e6e]">
      <svg viewBox="0 0 10 6" className="h-1.5 w-2.5" fill="none" aria-hidden="true">
        <path d="m1 .8 4 4 4-4" stroke="#000" strokeWidth="2" />
      </svg>
    </span>
    <span className="pt-0.5 pl-1">{title}</span>
  </button>
);

const ToolSection = ({ title, tools }: { title: string; tools: Tool[] }) => (
  <section className="h-[174px] shrink-0">
    <SectionHeader title={title} />
    <div className="-ml-px grid grid-cols-[repeat(auto-fill,42px)] pt-0.5">
      {tools.map((tool) => (
        <button
          key={tool.name}
          title={tool.name}
          className={clsx(
            "relative flex h-9 items-center justify-center",
            tool.selected && "bg-[#2f62d0] outline-1 -outline-offset-1 outline-[#a8c0f0] outline-dotted",
          )}
        >
          {tool.icon}
          {tool.marked && (
            <span className="pointer-events-none absolute -top-1.5 right-[3px] -bottom-px -left-0.5 rounded-[10px] bg-[#ffff00] mix-blend-multiply" />
          )}
        </button>
      ))}
    </div>
  </section>
);

const FolderIcon = ({ person }: { person?: boolean }) => (
  <Svg16>
    <path d="M1 2h5l1 2h7v10H1z" fill="#fbdc8c" stroke="#c8962c" strokeWidth=".8" />
    {person ? (
      <>
        <circle cx="12.500" cy="2.500" r="2" fill="#12204c" />
        <path d="M10 5h5v6l-1 4h-3l-1-4z" fill="#2a6fa8" />
      </>
    ) : (
      <>
        <path d="M9 6h6v5H9z" fill="#c8d4e4" stroke="#4c5870" />
        <path d="M8 12h8v2H8z" fill="#4c5870" />
      </>
    )}
    <path d="M0 9h6v6H0z" fill="#fff" />
    <path d="m1 14 4-4M2 10h3v3" stroke="#00003c" strokeWidth="1.500" />
  </Svg16>
);

const Toolbox = () => (
  <aside className="flex w-[321px] shrink-0 flex-col overflow-hidden bg-[#f0f0f0]">
    <h2 className="h-6 shrink-0 border-b border-[#6e6e6e] bg-linear-to-b from-[#f2f2f2] to-[#dedede] pl-[5px] text-[13px] leading-6 font-medium">
      Options
    </h2>
    <div className="flex h-[27px] shrink-0 items-center bg-[#eaeaea] pr-[5px] pl-[7px]">
      <button aria-label="Pointer" className="w-6">
        <Svg16>
          <path d="M4 1v12l3-3 2 5 2-1-2-5h3z" fill="#00003c" />
        </Svg16>
      </button>
      <button aria-label="Stamp" className="w-6">
        <Svg16>
          <circle cx="7.500" cy="3.500" r="3.500" fill="#d8b038" />
          <path d="M6 6h3v3l4 1v2H2v-2l4-1z" fill="#b88c1c" />
          <path d="M0 12h15v3H0z" fill="#8a640c" />
        </Svg16>
      </button>
      <button aria-label="Toolbox settings" className="w-6">
        <Svg16>
          <path d="M.5 2.500h8v12h-8z" fill="#eee" stroke="#999" />
          <path d="M2 5.500h2M5 5.500h2M2 8.500h2M5 8.500h2M2 11.500h2M5 11.500h2" stroke="#444" />
          <path d="M12 15V6" stroke="#777" strokeWidth="3" />
          <path d="M9 1v4l3 2 3-2V1h-1.500v3h-3V1z" fill="#666" />
        </Svg16>
      </button>
      <button aria-label="Show columns" className="w-6">
        <Svg16>
          <path d="M.5 1.500h15v13H.5z" fill="#fff" stroke="#3a56c8" />
          <path d="M0 1h16v3H0z" fill="#00104c" />
          <path
            d="M2 5.500h3M6.500 5.500h3M11 5.500h3M2 7.500h3M6.500 7.500h3M11 7.500h3M2 9.500h3M6.500 9.500h3M11 9.500h3M2 11.500h3M6.500 11.500h3M11 11.500h3"
            stroke="#222"
          />
        </Svg16>
      </button>
      <div className="relative h-[18px] w-[119px]">
        <select
          aria-label="Style"
          defaultValue="Dark default value"
          className="block size-full appearance-none border border-[#868686] bg-white pl-1 text-[11px] outline-none"
        >
          <option>Dark default value</option>
          <option>Light default value</option>
        </select>
        <span className="pointer-events-none absolute inset-y-0 right-0 flex w-[17px] items-center justify-center border border-[#868686] bg-[#ebebeb]">
          <Triangle />
        </span>
      </div>
      <button aria-label="Restore pane" className="ml-auto">
        <Svg16>
          <path d="M1.500 1.500h13v12h-13z" fill="url(#paper)" stroke="#8fa0e4" />
          <path d="M2 3.500h12M2 11.500h12M1 14.500h15" stroke="#4a5fd8" />
        </Svg16>
      </button>
    </div>

    <ToolSection title="Basic objects" tools={basicObjects} />
    <ToolSection title="Elements" tools={elements} />
    <ToolSection title="Controls" tools={controls} />

    <section className="flex min-h-0 flex-1 flex-col">
      <SectionHeader title="Graphics" />
      <div className="flex h-[26px] shrink-0 items-center gap-2 bg-[#eaeaea] pb-1 pl-1.5">
        <button aria-label="New folder link">
          <Svg16>
            <path d="M1 2h5l1 2h8v9H1z" fill="#fbdc8c" stroke="#c8962c" strokeWidth=".8" />
            <path d="M11.500 0v9M7 4.500h9M8.500 1.500l6 6M14.500 1.500l-6 6" stroke="#f5e400" strokeWidth="1.500" />
            <circle cx="11.500" cy="4.500" r="1.200" fill="#30a0b0" />
            <path d="M0 9h6v6H0z" fill="#eaeaea" />
            <path d="m1 14 4-4M2 10h3v3" stroke="#00003c" strokeWidth="1.500" />
          </Svg16>
        </button>
        <button aria-label="Remove folder link">
          <Svg16>
            <path d="M1 2h5l1 2h8v9H1z" fill="#e4e4e4" stroke="#bbb" strokeWidth=".8" />
            <path d="m9 8 6 6M15 8l-6 6" stroke="#444" strokeWidth="2" />
            <path d="m1 14 4-4M2 10h3v3" stroke="#444" strokeWidth="1.500" />
          </Svg16>
        </button>
      </div>
      <ul className="text-[11px] font-semibold">
        <li className="flex h-[19px] items-center border-b border-white pl-1.5">
          <svg viewBox="0 0 5 8" className="mr-1.5 h-2 w-[5px]" aria-hidden="true">
            <path d="M0 0v8l5-4z" fill="#000" />
          </svg>
          <FolderIcon />
          <button className="ml-0.5 h-[18px] bg-[#c0cad6] pl-px leading-[18px]">
            WinCC graphics folder
          </button>
        </li>
        <li className="flex h-[19px] items-center border-b border-white pl-[17px]">
          <FolderIcon person />
          <button className="ml-[3px] leading-[18px]">My graphics folder</button>
        </li>
        {[0, 1, 2].map((i) => (
          <li key={i} className="h-[19px] border-b border-white" />
        ))}
      </ul>
      <div className="mt-1 flex h-2 shrink-0 justify-center gap-2.5 border-y border-[#868686] bg-[#dcdcdc]">
        <button aria-label="Shrink preview" className="flex w-6 items-center justify-center border-x border-[#868686] bg-[#c4c4c4]">
          <svg viewBox="0 0 6 3" className="h-[3px] w-1.5" aria-hidden="true">
            <path d="M0 3h6L3 0z" fill="#000" />
          </svg>
        </button>
        <button aria-label="Grow preview" className="flex w-6 items-center justify-center border-x border-[#868686] bg-[#c4c4c4]">
          <svg viewBox="0 0 6 3" className="h-[3px] w-1.5" aria-hidden="true">
            <path d="M0 0h6L3 3z" fill="#000" />
          </svg>
        </button>
      </div>
    </section>
  </aside>
);

/* ---------- task card tabs ---------- */

const taskCards = [
  {
    name: "Toolbox",
    height: "h-[98px]",
    icon: (
      <Svg16>
        <circle cx="9.500" cy="6" r="6" fill="url(#blueFill)" stroke="#4a62e8" strokeWidth=".8" />
        <path d="m1 14 4-10 4 10M2.500 11h5" stroke="#00003c" strokeWidth="1.500" />
      </Svg16>
    ),
  },
  {
    name: "Animations",
    height: "h-[121px]",
    icon: (
      <Svg16>
        <path d="M8 1h7v4H8z" fill="#28a0e0" />
        <path d="M0 11h7v4H0z" fill="#e020e0" />
        <path d="M2 10q1-4 4-3t3 4q3 0 3-5" stroke="#00003c" strokeWidth="1.500" />
        <path d="m10 7 2-3 2 3z" fill="#00003c" />
      </Svg16>
    ),
  },
  {
    name: "Layout",
    height: "h-[90px]",
    icon: (
      <Svg16>
        <path
          d="M3 1.500h12M3 4.500h12M3 7.500h12M3 10.500h12"
          stroke="#00003c"
          strokeDasharray="1 2"
        />
        <path d="m0 13 4-3h7l-3 5H0zM0 10l4-3h7l-3 4H0zM0 7l4-3h7L8 8H0z" fill="url(#gold)" stroke="#b08018" strokeWidth=".8" />
      </Svg16>
    ),
  },
  {
    name: "Instructions",
    height: "h-[124px]",
    icon: (
      <Svg16>
        <path d="M0 6h12v9H0z" fill="#eef6ff" stroke="#40a0c0" />
        <path d="M3 8.500h2.500v4.500H3zM9 8v6" stroke="#00003c" strokeWidth="1.500" />
        <path d="M8 0v9M3.500 4.500h9M5 1.500l6 6M11 1.500l-6 6" stroke="#e030d0" strokeWidth="1.200" />
        <path d="m11 8 4 4" stroke="#26326e" strokeWidth="2.500" />
      </Svg16>
    ),
  },
  {
    name: "Tasks",
    height: "h-[81px]",
    icon: (
      <Svg16>
        <path d="M.7 2h11v13H.7z" fill="#fffbe8" stroke="#c8962c" strokeWidth="1.500" />
        <path d="M4 1h5v2H4z" fill="#666" />
        <path d="M2.500 5.500h1M5 5.500h5M2.500 8h1M5 8h5M2.500 10.500h1M5 10.500h3" stroke="#000" strokeWidth="1.200" />
        <path d="m6 11 3 3 6-7" stroke="#0c8a20" strokeWidth="2.500" />
      </Svg16>
    ),
  },
  {
    name: "Libraries",
    height: "h-[102px]",
    icon: (
      <Svg16>
        <path d="M.7 3h6l.8 1 .8-1h6v10h-6l-.8 1-.8-1h-6z" fill="url(#paper)" stroke="#1a2a90" strokeWidth="1.500" />
        <path d="M7.500 4v10" stroke="#3a56e8" strokeWidth="1.500" />
      </Svg16>
    ),
  },
  { name: "Add-ins", height: "h-[83px]", icon: null },
];

const TaskCardTabs = () => (
  <div className="flex w-[25px] shrink-0 flex-col items-start gap-0.5 border-l border-[#2a2a2a] bg-[#b1b1b1] pt-0.5">
    {taskCards.map((card, i) => (
      <button
        key={card.name}
        className={clsx(
          "flex w-[21px] shrink-0 flex-col items-center border border-[#6e6e6e] pt-0.5",
          card.height,
          i === 0
            ? "border-l-0 bg-[#f0f0f0] text-black"
            : "bg-linear-to-r from-[#e6e6e6] to-[#d8d8d8] text-[#5a5a5a]",
        )}
      >
        {card.icon}
        <span
          className={clsx(
            "text-[13px] leading-[18px] font-bold whitespace-nowrap [writing-mode:vertical-rl]",
            i === 0 || i === 2 ? "pt-1.5" : "pt-2",
          )}
        >
          {card.name}
        </span>
      </button>
    ))}
  </div>
);

/* ---------- bottom bars ---------- */

const editorTabs = [
  {
    name: "PLC tags",
    icon: (
      <Svg16>
        <path d="M.5.5h9v11h-9z" fill="#eef1ff" stroke="#8f98c8" />
        <path d="M2 3h2M5 3h3M2 5.500h2M5 5.500h3M2 8h2" stroke="#333" />
        <path d="M5 5h8l2 2v4H5z" fill="url(#purple)" stroke="#3a1f9c" strokeWidth=".8" />
        <path d="M7 10h8v5H7z" fill="url(#purple)" stroke="#3a1f9c" strokeWidth=".8" />
      </Svg16>
    ),
  },
  {
    name: "Text and gra...",
    icon: (
      <Svg16>
        <path d="M.5.5h14v14H.5z" fill="#eef1ff" stroke="#a9b7ec" />
        <path d="M2 3.500 3.500 2.500V7M2 9.500h2.500L2 13h3M6 6.500h1M6 12.500h1" stroke="#000" />
        <circle cx="11" cy="4" r="2.500" fill="#ffab1a" />
        <path d="m11 8 3 5H8z" fill="#2438c0" />
      </Svg16>
    ),
  },
  {
    name: "Different jobs",
    active: true,
    icon: (
      <Svg16>
        <path d="M.5 2.500h14v12H.5z" fill="url(#blueFill)" fillOpacity=".35" stroke="#3c4660" />
      </Svg16>
    ),
  },
];

const StatusBar = () => (
  <footer className="flex h-[29px] shrink-0 items-center bg-[#1c1c1c] text-[11px]">
    <div className="flex min-w-0 flex-1 items-center gap-[3px]">
      <span className="h-5 w-[9px] bg-[#c4c4c4]" />
      {editorTabs.map((tab) => (
        <button
          key={tab.name}
          className={clsx(
            "flex h-5 w-[113px] items-center gap-1 pl-[3px]",
            tab.active ? "bg-white text-[12px] font-semibold" : "bg-[#c4c4c4]",
          )}
        >
          {tab.icon}
          {tab.name}
        </button>
      ))}
      <button
        aria-label="Arrange editors"
        className="mr-1.5 ml-auto flex size-5 items-center justify-center bg-[#c4c4c4]"
      >
        <Svg16>
          <path d="M0 1h7v9H0z" fill="#fff" />
          <path d="M0 4h7M0 7h7" stroke="#8a90b0" />
          <path d="M.7 12h14v3H.7z" fill="#fff" stroke="#00003c" strokeWidth="1.400" />
          <path d="M5.500 12v3M10 12v3M14 9V5h-3" stroke="#00003c" strokeWidth="1.300" />
          <path d="m8 5 4-3v6z" fill="#00003c" />
        </Svg16>
      </button>
    </div>
    <div className="flex h-full w-[348px] shrink-0 items-center border-l border-[#6a6a6a] pt-0.5 pr-5 pl-[3px]">
      <svg viewBox="0 0 16 16" className="size-4" fill="none" aria-hidden="true">
        <circle cx="8" cy="8" r="7.500" fill="#0000f5" />
        <path d="m4 8 3 3 5.500-6" stroke="#fff" strokeWidth="2" />
      </svg>
      <span className="ml-1 text-white">The project Standard Ben was saved su...</span>
      <Svg16 className="ml-auto">
        <path d="M1 15q2-7 7-7v4l8-7q0-4-4-4 1 3-2 4L3 1q-4 2 1 7z" fill="#8a8a8a" />
        <path d="M2 15q8 1 13-8" stroke="#d0d0d0" strokeWidth="1.500" />
      </Svg16>
    </div>
  </footer>
);

const Taskbar = () => (
  <div className="flex h-5 shrink-0 items-start justify-between overflow-hidden bg-[#101010] text-white">
    <div className="flex items-start">
      <button aria-label="Task view" className="mt-3 ml-1.5 w-[49px]">
        <svg viewBox="0 0 18 18" className="size-[18px]" fill="none" aria-hidden="true">
          <path d="M1.500 0v2.500h10V0M1 6.500h11v8H1zM16 0v2M14.500 5h3v3h-3z" stroke="#fff" strokeWidth="1.500" />
        </svg>
      </button>
      <button aria-label="File explorer" className="mt-[11px] w-9">
        <svg viewBox="0 0 22 18" className="h-[18px] w-[22px]" aria-hidden="true">
          <path d="M0 0h9l2 2h11v4H0z" fill="#e8a912" />
          <path d="M0 4h22v14H0z" fill="#ffd868" />
        </svg>
      </button>
      <button className="flex h-10 w-12 items-start justify-center border-r-[3px] border-[#2a2a2a] bg-[#333333] pt-2">
        <span className="size-6 bg-[#3a4658] text-center text-[14px] leading-[14px]">TIA</span>
      </button>
      <button aria-label="Screen capture" className="mt-2 ml-3.5">
        <svg viewBox="0 0 24 24" className="size-6" aria-hidden="true">
          <ellipse cx="12" cy="10" rx="11" ry="7" transform="rotate(-22 12 10)" fill="#f4eded" stroke="#c02028" />
          <path
            d="M9 7q-3 0-3 2t2 2-3 3M17 5l-4 1-1 7M12 10l4-1"
            fill="none"
            stroke="#888"
            strokeWidth="1.200"
          />
        </svg>
      </button>
    </div>
    <div className="flex items-start">
      <svg viewBox="0 0 84 12" className="mt-3 mr-6 h-3 w-[84px]" fill="none" aria-hidden="true">
        <path d="m1 8 4-4 4 4" stroke="#fff" strokeWidth="1.500" />
        <path d="M27 3h9v9M22 0v3M25 0v3M20 4h6v3h-3v5" stroke="#fff" strokeWidth="1.500" />
        <circle cx="53" cy="8" r="7.500" stroke="#fff" strokeWidth="1.300" />
        <ellipse cx="53" cy="8" rx="3" ry="7.500" stroke="#fff" strokeWidth="1.200" />
        <path d="M46 8h14M47 4h12" stroke="#fff" strokeWidth="1.200" />
        <path d="M69 7h3l4-4v9M78 5l4 4M82 5l-4 4" stroke="#fff" strokeWidth="1.300" />
      </svg>
      <time className="mt-0.5 mr-[34px] text-[11px] leading-4">14:45</time>
      <svg viewBox="0 0 17 12" className="mt-3 mr-[25px] h-3 w-[17px]" aria-hidden="true">
        <path d="M0 0h17v12H0z" fill="#fff" />
        <path d="M3 3h11v1.500H3zM3 7h11v1.500H3z" fill="#101010" />
      </svg>
    </div>
  </div>
);

export default function App() {
  return (
    <div className="flex h-screen flex-col overflow-hidden bg-[#1c1c1c] font-['Noto_Sans',sans-serif] text-black">
      <IconDefs />
      <div className="flex min-h-0 flex-1">
        <main className="flex min-w-0 flex-1 flex-col border-l-[3px] border-[#1a2030]">
          <div className="h-6 shrink-0 border-b border-[#6e6e6e] bg-[#cccccc]" />
          <FormatToolbar />
          <ScreenEditor />
          <HorizontalScrollbar />
          <div className="h-[3px] shrink-0 bg-[#1a2030]" />
          <Inspector />
        </main>
        <div className="w-[3px] shrink-0 bg-[#1a1a1a]" />
        <Toolbox />
        <TaskCardTabs />
      </div>
      <StatusBar />
      <Taskbar />
    </div>
  );
}
